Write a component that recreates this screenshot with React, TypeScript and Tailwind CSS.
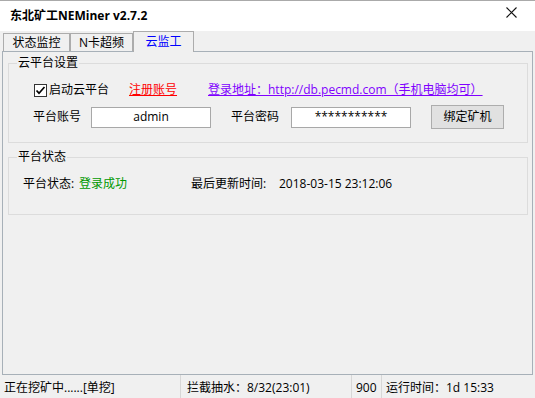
import React from "react";

function CheckBox() {
  return (
    <div className="flex h-[13px] w-[13px] items-center justify-center border border-[#333333] bg-white">
      <svg width="11" height="11" viewBox="0 0 11 11">
        <path d="M1.5 5.5 L4 8.2 L9.5 2" fill="none" stroke="#000" strokeWidth="1.7" />
      </svg>
    </div>
  );
}

export default function App() {
  return (
    <div className="flex h-[398px] w-[535px] flex-col overflow-hidden bg-[#f0f0f0] font-['Open_Sans','Noto_Sans_CJK_SC',sans-serif] text-[12px] leading-[16px] text-black">
      {/* Title bar */}
      <div className="flex h-[31px] items-center justify-between border-t border-[#aaaaaa] bg-white pl-[10px]">
        <div className="font-bold">东北矿工NEMiner v2.7.2</div>
        <div className="mr-[18px] self-start pt-[6px]">
          <svg width="11" height="11" viewBox="0 0 11 11">
            <path d="M0.5 0.5 L10.5 10.5 M10.5 0.5 L0.5 10.5" stroke="#111" strokeWidth="1.1" />
          </svg>
        </div>
      </div>

      {/* Tabs */}
      <div className="flex h-[20px] items-end pl-[3px]">
        <div className="flex h-[18px] w-[67px] items-center justify-center border border-b-0 border-[#acacac] pt-px">状态监控</div>
        <div className="flex h-[18px] w-[63px] items-center justify-center border border-b-0 border-[#acacac] pt-px">N卡超频</div>
        <div className="relative z-10 -mb-px flex h-[21px] w-[61px] items-center justify-center border border-b-0 border-[#acacac] bg-[#f0f0f0] text-[#0000ff]">云监工</div>
      </div>

      {/* Panel */}
      <div className="ml-[2px] mr-[2px] flex-1 border border-[#a7b0b8]">
        {/* Group 1 */}
        <div className="ml-[5px] mr-[4px] mt-[11px] h-[80px] border border-[#dcdcdc]">
          <div className="-mt-[9px] ml-[8px] w-fit bg-[#f0f0f0] px-px">云平台设置</div>
          <div className="mt-[9px] flex h-[20px] items-center pl-[25px]">
            <CheckBox />
            <div className="ml-[2px] w-[80px]">启动云平台</div>
            <div className="w-[79px] text-[#ff0000] underline">注册账号</div>
            <div className="whitespace-nowrap text-[#8000ff] underline">登录地址：http://db.pecmd.com（手机电脑均可）</div>
          </div>
          <div className="mt-[5px] flex h-[24px] items-center pl-[24px]">
            <div className="w-[58px]">平台账号</div>
            <div className="flex h-[21px] w-[120px] items-center justify-center border border-[#a8a8a8] bg-white">admin</div>
            <div className="ml-[20px] w-[60px]">平台密码</div>
            <div className="flex h-[21px] w-[120px] items-center justify-center border border-[#a8a8a8] bg-white">***********</div>
            <div className="ml-[20px] flex h-[24px] w-[73px] items-center justify-center border border-[#adadad] bg-[#e1e1e1]">绑定矿机</div>
          </div>
        </div>

        {/* Group 2 */}
        <div className="ml-[5px] mr-[4px] mt-[14px] h-[58px] border border-[#dcdcdc]">
          <div className="-mt-[9px] ml-[8px] w-fit bg-[#f0f0f0] px-px">平台状态</div>
          <div className="mt-[11px] flex h-[16px] items-center pl-[14px]">
            <div className="w-[56px]">平台状态:</div>
            <div className="w-[112px] text-[#009900]">登录成功</div>
            <div className="w-[88px]">最后更新时间:</div>
            <div>2018-03-15 23:12:06</div>
          </div>
        </div>
      </div>

      {/* Status bar */}
      <div className="flex h-[23px] items-stretch whitespace-nowrap">
        <div className="flex w-[181px] items-center border-r border-[#d7d7d7] pl-[4px] pt-[2px]">正在挖矿中......[单挖]</div>
        <div className="flex w-[171px] items-center border-r border-[#d7d7d7] pl-[6px] pt-[2px]">拦截抽水：8/32(23:01)</div>
        <div className="flex w-[30px] items-center border-r border-[#d7d7d7] pl-[4px] pt-[2px]">900</div>
        <div className="flex flex-1 items-center pl-[4px] pt-[2px]">运行时间：1d 15:33</div>
      </div>
    </div>
  );
}
